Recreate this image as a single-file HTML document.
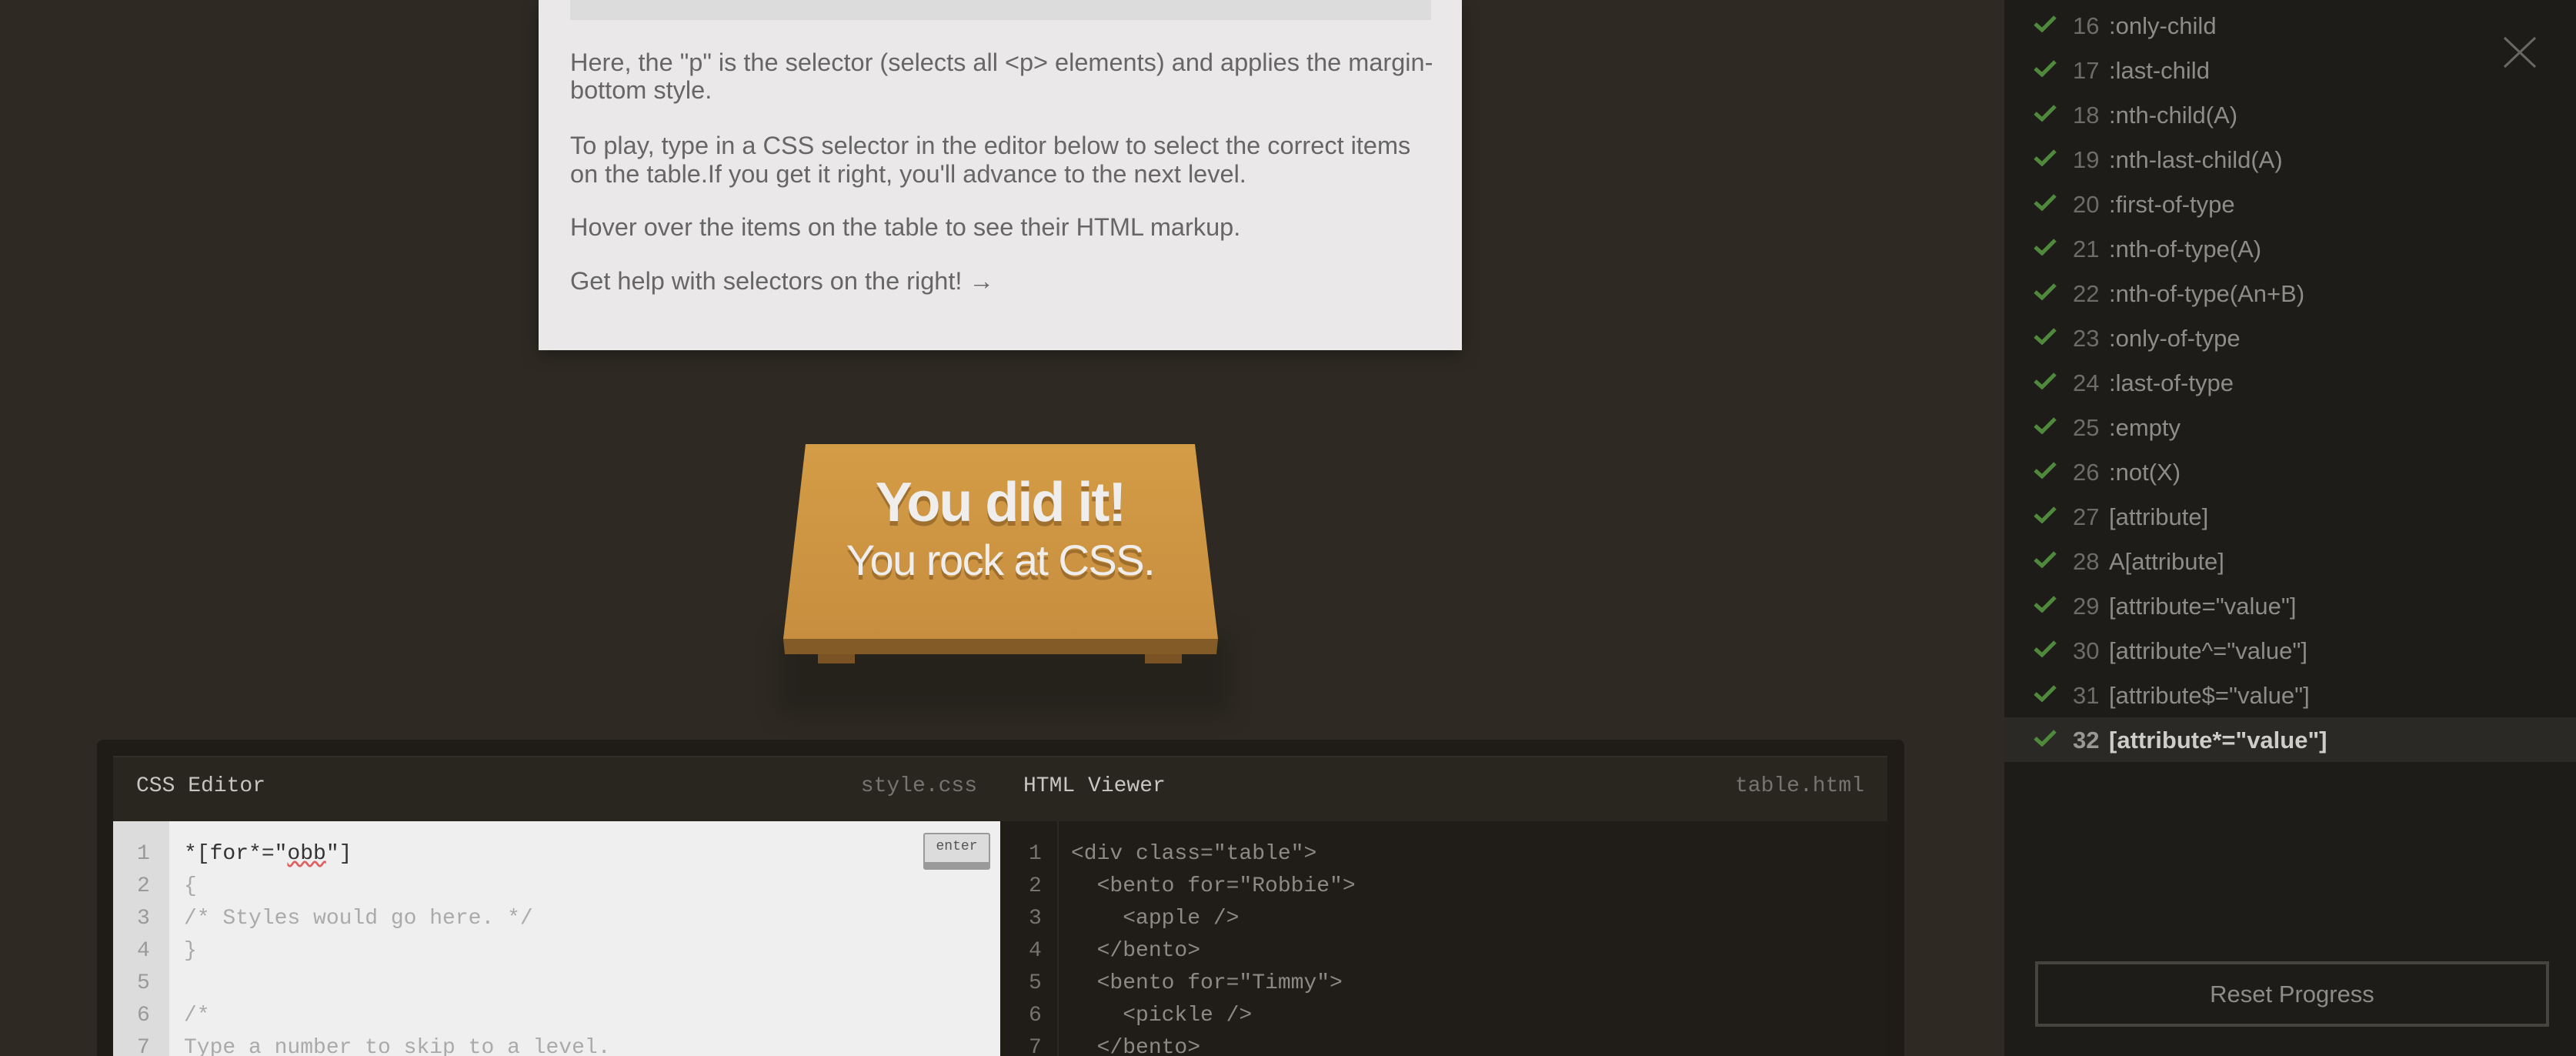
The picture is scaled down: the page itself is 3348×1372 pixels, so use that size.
<!DOCTYPE html>
<html style="overflow:hidden"><head><meta charset="utf-8"><style>
*{margin:0;padding:0;box-sizing:border-box}
html,body{width:3348px;height:1372px;overflow:hidden}
body{background:#2e2a23;position:relative;font-family:"Liberation Sans",sans-serif}
.abs{position:absolute;white-space:nowrap}
#info{left:700px;top:0;width:1200px;height:455px;background:#eae8e8;box-shadow:0 6px 20px rgba(0,0,0,.35)}
#code{left:741px;top:0;width:1119px;height:26px;background:#dcdcdc}
.p{color:#666;font-size:32.5px;left:741px}
.mono{font-family:"Liberation Mono",monospace;font-size:28px}
#side{left:2605px;top:0;width:743px;height:1372px;background:#1e1c18}
.row{left:2605px;width:743px;height:58px;font-size:31px;color:#8e8c88}
.row .ck{position:absolute;left:38px;top:14px}
.row .n{position:absolute;left:89px;top:12px;color:#6e6c68}
.row .t{position:absolute;left:136px;top:12px}
.row.cur{background:#2b2925;color:#cfcdca;font-weight:bold}
.row.cur .n{color:#9a9894}
</style></head><body>
<div class="abs" id="info"></div>
<div class="abs" id="code"></div>
<div class="abs p" style="top:63px">Here, the "p" is the selector (selects all &lt;p&gt; elements) and applies the margin-</div>
<div class="abs p" style="top:99px">bottom style.</div>
<div class="abs p" style="top:171px">To play, type in a CSS selector in the editor below to select the correct items</div>
<div class="abs p" style="top:208px">on the table.If you get it right, you'll advance to the next level.</div>
<div class="abs p" style="top:277px">Hover over the items on the table to see their HTML markup.</div>
<div class="abs p" style="top:347px">Get help with selectors on the right! →</div>

<!-- table -->
<div class="abs" style="left:1010px;top:820px;width:590px;height:110px;background:rgba(0,0,0,.18);filter:blur(14px)"></div>
<svg class="abs" style="left:0;top:0" width="2600" height="900">
<defs><linearGradient id="g" x1="0" y1="0" x2="0" y2="1"><stop offset="0" stop-color="#d49c46"/><stop offset="1" stop-color="#c78e3f"/></linearGradient></defs>
<polygon points="1047,577 1553,577 1583,830 1018,830" fill="url(#g)"/>
<polygon points="1018,830 1583,830 1581,850 1020,850" fill="#835b27"/>
<rect x="1063" y="850" width="48" height="12" fill="#7a5224"/>
<rect x="1488" y="850" width="48" height="12" fill="#7a5224"/>
</svg>
<div class="abs" style="left:1000px;top:612px;width:600px;text-align:center;color:#f0eeec;font-weight:bold;font-size:72px;letter-spacing:-2px;text-shadow:0 6px 0 rgba(120,80,30,.55)">You did it!</div>
<div class="abs" style="left:1000px;top:695px;width:600px;text-align:center;color:#f0eeec;font-size:56px;letter-spacing:-1.5px;text-shadow:0 6px 0 rgba(120,80,30,.55)">You rock at CSS.</div>

<!-- editor -->
<div class="abs" style="left:126px;top:961px;width:2349px;height:411px;background:#1f1c18;border-radius:8px 8px 0 0"></div>
<div class="abs" style="left:147px;top:982px;width:2306px;height:85px;background:#29261f;border-top:2px solid #33302a"></div>
<div class="abs mono" style="left:177px;top:1006px;color:#c8c6c2;font-size:28px">CSS Editor</div>
<div class="abs mono" style="left:1100px;top:1006px;width:170px;text-align:right;color:#77746f">style.css</div>
<div class="abs mono" style="left:1330px;top:1006px;color:#c8c6c2">HTML Viewer</div>
<div class="abs mono" style="left:2200px;top:1006px;width:223px;text-align:right;color:#77746f">table.html</div>
<div class="abs" style="left:147px;top:1067px;width:1153px;height:305px;background:#efefef"></div>
<div class="abs" style="left:147px;top:1067px;width:73px;height:305px;background:#dcdcdc"></div>
<div class="abs" style="left:1300px;top:1067px;width:1153px;height:305px;background:#201d19"></div>
<div class="abs" style="left:1374px;top:1067px;width:2px;height:305px;background:#2c2925"></div>
<div class="abs" style="left:1200px;top:1082px;width:87px;height:48px;background:#dcdcdc;border:2px solid #9a9a9a;border-bottom:10px solid #9a9a9a;border-radius:3px;font-family:'Liberation Mono',monospace;font-size:18px;color:#555;text-align:center;line-height:32px">enter</div>
<div class="abs mono" style="left:178px;top:1089px;line-height:42px;color:#999">1<br>2<br>3<br>4<br>5<br>6<br>7</div>
<div class="abs mono" style="left:239px;top:1089px;line-height:42px;color:#aaa"><span style="color:#333">*[for*="<span style="text-decoration:underline wavy #e06060">obb</span>"]</span><br>{<br>/* Styles would go here. */<br>}<br><br>/*<br>Type a number to skip to a level.</div>
<div class="abs mono" style="left:1337px;top:1089px;line-height:42px;color:#77746f">1<br>2<br>3<br>4<br>5<br>6<br>7</div>
<div class="abs mono" style="left:1392px;top:1089px;line-height:42px;color:#8d8a85;white-space:pre">&lt;div class="table"&gt;
  &lt;bento for="Robbie"&gt;
    &lt;apple /&gt;
  &lt;/bento&gt;
  &lt;bento for="Timmy"&gt;
    &lt;pickle /&gt;
  &lt;/bento&gt;</div>

<!-- sidebar -->
<div class="abs" id="side"></div>
<svg class="abs" style="left:3253px;top:47px" width="44" height="42"><path d="M2 2L42 40M42 2L2 40" stroke="#6a6864" stroke-width="3"/></svg>
<div id="rows"></div>
<div class="abs" style="left:2645px;top:1249px;width:668px;height:85px;border:4px solid #46443f;color:#8e8c88;font-size:31px;text-align:center;line-height:77px">Reset Progress</div>
<script>
var items=[":only-child",":last-child",":nth-child(A)",":nth-last-child(A)",":first-of-type",":nth-of-type(A)",":nth-of-type(An+B)",":only-of-type",":last-of-type",":empty",":not(X)","[attribute]","A[attribute]",'[attribute="value"]','[attribute^="value"]','[attribute$="value"]','[attribute*="value"]'];
var h="";items.forEach(function(t,i){var y=4+i*58;
h+='<div class="abs row'+(i==16?' cur':'')+'" style="top:'+y+'px"><svg class="ck" width="30" height="24"><path d="M2 13L11 21L28 4" stroke="#4f8a3c" stroke-width="5" fill="none"/></svg><span class="n">'+(16+i)+'</span><span class="t">'+t.replace(/</g,'&lt;')+'</span></div>';});
document.getElementById('rows').innerHTML=h;
</script>
</body></html>
